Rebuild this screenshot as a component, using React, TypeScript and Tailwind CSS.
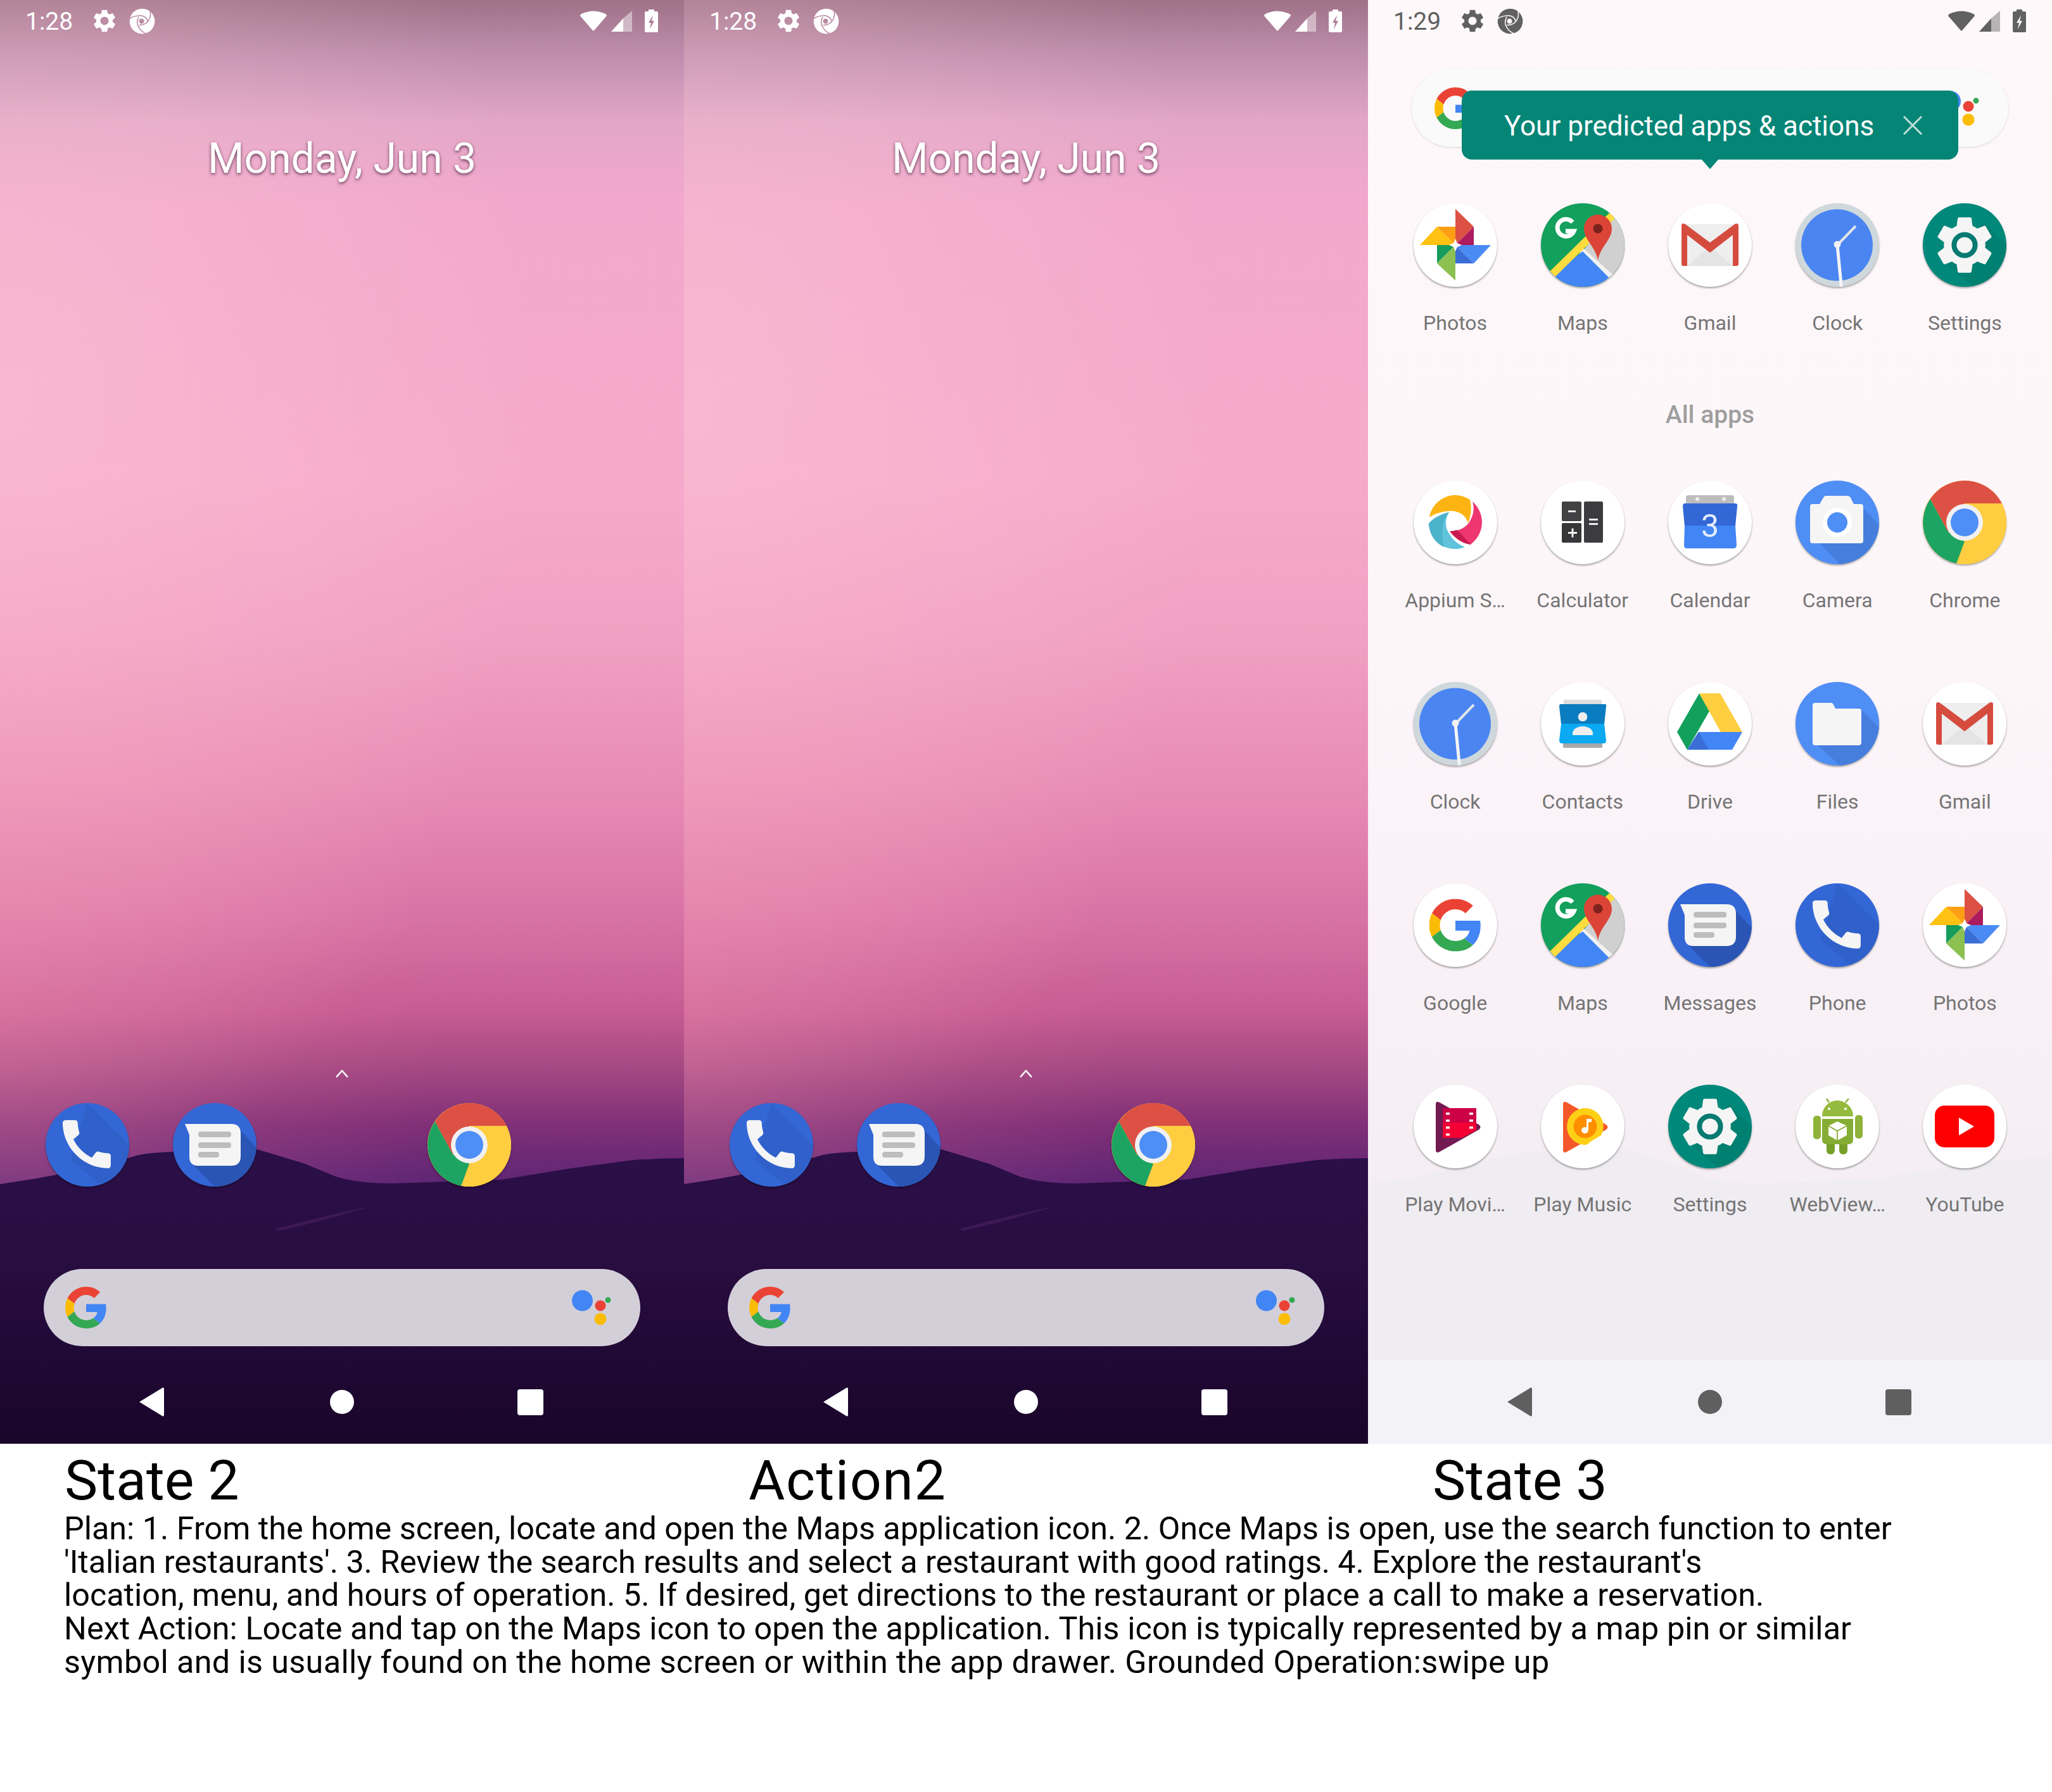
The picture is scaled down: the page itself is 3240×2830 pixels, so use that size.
const GEAR_OUTER =
  "M19.14 12.94c.04-.3.06-.61.06-.94 0-.32-.02-.64-.07-.94l2.03-1.58c.18-.14.23-.41.12-.61l-1.92-3.32c-.12-.22-.37-.29-.59-.22l-2.39.96c-.5-.38-1.03-.7-1.62-.94l-.36-2.54c-.04-.24-.24-.41-.48-.41h-3.84c-.24 0-.43.17-.47.41l-.36 2.54c-.59.24-1.13.57-1.62.94l-2.39-.96c-.22-.08-.47 0-.59.22L2.74 8.87c-.12.21-.08.47.12.61l2.03 1.58c-.05.3-.09.63-.09.94s.02.64.07.94l-2.03 1.58c-.18.14-.23.41-.12.61l1.92 3.32c.12.22.37.29.59.22l2.39-.96c.5.38 1.03.7 1.62.94l.36 2.54c.05.24.24.41.48.41h3.84c.24 0 .44-.17.47-.41l.36-2.54c.59-.24 1.13-.56 1.62-.94l2.39.96c.22.08.47 0 .59-.22l1.92-3.32c.12-.22.07-.47-.12-.61l-2.01-1.58z";
const GEAR_HOLE = "M12 15.6c-1.98 0-3.6-1.62-3.6-3.6s1.62-3.6 3.6-3.6 3.6 1.62 3.6 3.6-1.62 3.6-3.6 3.6z";
const RIDGE =
  "M0 70 L58 61 L90 55 L172 38 L215 25 Q234 20 275 19 L330 17 Q370 12 406 15 L482 38 L530 58 Q565 69 620 69 L792 63 L895 46 L999 32 Q1040 29 1080 29 L1080 480 L0 480 Z";

// 132 x 132 launcher icon shell
function Icon({ children, bg = "bg-white" }: { children: React.ReactNode; bg?: string }) {
  return (
    <div className={`h-[132px] w-[132px] shrink-0 overflow-hidden rounded-full shadow-[0_2px_3px_rgba(0,0,0,0.35)] ${bg}`}>
      <svg viewBox="0 0 132 132" className="h-full w-full">
        {children}
      </svg>
    </div>
  );
}

function GoogleG({ className }: { className: string }) {
  return (
    <svg viewBox="0 0 48 48" className={className}>
      <path fill="#EA4335" d="M24 9.5c3.54 0 6.71 1.22 9.21 3.6l6.85-6.85C35.9 2.38 30.47 0 24 0 14.62 0 6.51 5.38 2.56 13.22l7.98 6.19C12.43 13.72 17.74 9.5 24 9.5z" />
      <path fill="#4285F4" d="M46.98 24.55c0-1.57-.15-3.09-.38-4.55H24v9.02h12.94c-.58 2.96-2.26 5.48-4.78 7.18l7.73 6c4.51-4.18 7.09-10.36 7.09-17.65z" />
      <path fill="#FBBC05" d="M10.53 28.59c-.5-1.45-.78-2.99-.78-4.59s.27-3.14.78-4.59l-7.98-6.19C.92 16.46 0 20.12 0 24c0 3.88.92 7.54 2.56 10.78l7.97-6.19z" />
      <path fill="#34A853" d="M24 48c6.48 0 11.93-2.13 15.89-5.81l-7.73-6c-2.15 1.45-4.92 2.3-8.16 2.3-6.26 0-11.57-4.22-13.47-9.91l-7.98 6.19C6.51 42.62 14.62 48 24 48z" />
    </svg>
  );
}

function AssistantDots() {
  return (
    <svg viewBox="0 0 62 56" className="h-[56px] w-[62px]">
      <circle cx="16.5" cy="17" r="16.5" fill="#4285F4" />
      <circle cx="45" cy="25" r="8.5" fill="#EA4335" />
      <circle cx="45" cy="46" r="9.5" fill="#FBBC05" />
      <circle cx="57" cy="16" r="4.5" fill="#34A853" />
    </svg>
  );
}

function PhoneIcon() {
  return (
    <Icon bg="bg-[#3367d6]">
      <path d="M66 0 L132 66 L132 132 L90 132 L40 90 Z" fill="#2f5ec4" opacity="0.7" />
      <path transform="translate(14.3 14.3) scale(4.22)" fill="#f5f5f5" d="M20.01 15.38c-1.23 0-2.42-.2-3.53-.56-.35-.12-.74-.03-1.01.24l-1.57 1.97c-2.83-1.35-5.48-3.9-6.89-6.83l1.95-1.66c.27-.28.35-.67.24-1.02-.37-1.11-.56-2.3-.56-3.53 0-.54-.45-.99-.99-.99H4.19C3.65 3 3 3.24 3 3.99 3 13.28 10.73 21 20.01 21c.71 0 .99-.63.99-1.18v-3.45c0-.54-.45-.99-.99-.99z" />
    </Icon>
  );
}

function MessagesIcon() {
  return (
    <Icon bg="bg-[#3367d6]">
      <path d="M100 36 L132 70 L132 132 L66 132 L26 92 Z" fill="#2a4fa8" opacity="0.75" />
      <path d="M19 33 H92 Q107 33 107 48 V84 Q107 99 92 99 H40 Q26 99 26 85 V50 Z" fill="#f5f5f5" />
      <rect x="40" y="45" width="52" height="9" rx="4" fill="#bdbdbd" />
      <rect x="40" y="62" width="52" height="9" rx="4" fill="#bdbdbd" />
      <rect x="40" y="77" width="33" height="9" rx="4" fill="#bdbdbd" />
    </Icon>
  );
}

function ChromeIcon() {
  return (
    <Icon bg="bg-[#ffca41]">
      <path d="M125.5 36 L66 36 L66 96 L53 131 A66 66 0 0 0 125.5 36Z" fill="#ffcd40" />
      <path d="M11.8 29 L40 81 L66 96 L53 131 A66 66 0 0 1 11.8 29Z" fill="#1da462" />
      <path d="M11.8 29 A66 66 0 0 1 125.5 36 L66 36 L40 81 Z" fill="#dd5144" />
      <circle cx="66" cy="66" r="29" fill="#f1f1f1" />
      <circle cx="66" cy="66" r="22" fill="#4e8ef7" />
    </Icon>
  );
}

function PhotosIcon() {
  return (
    <Icon>
      <polygon points="66,9 95,37 66,66" fill="#dd5144" />
      <polygon points="95,37 95,66 66,66" fill="#ad1a5e" />
      <polygon points="10,66 37,37 66,66" fill="#ffc112" />
      <polygon points="37,37 66,37 66,66" fill="#ff9e12" />
      <polygon points="66,66 122,66 95,95" fill="#4a8af4" />
      <polygon points="66,66 95,95 66,95" fill="#3a6ed6" />
      <polygon points="37,66 66,66 37,95" fill="#169d5b" />
      <polygon points="66,66 37,95 66,122" fill="#8cc152" />
      <polygon points="66,56 69,63 76,66 69,69 66,76 63,69 56,66 63,63" fill="#fff" />
    </Icon>
  );
}

function MapsIcon() {
  return (
    <Icon bg="bg-[#12a05c]">
      <polygon points="112,16 140,40 140,132 116,120 66,76" fill="#d0d0d0" />
      <polygon points="66,70 135,132 112,132 60,82" fill="#f1f1f1" />
      <polygon points="66,76 118,128 100,140 30,140 10,120" fill="#4285f4" />
      <line x1="12" y1="118" x2="118" y2="14" stroke="#fddc3f" strokeWidth="12" />
      <path d="M90 18 C78 18 68 28 68 40 C68 58 86 68 90 90 C94 68 112 58 112 40 C112 28 102 18 90 18Z" fill="#db4437" />
      <circle cx="90" cy="40" r="7.5" fill="#7b231c" />
      <path d="M50 30 A13.5 13.5 0 1 0 52 44 H39" fill="none" stroke="#fff" strokeWidth="7" />
    </Icon>
  );
}

function GmailIcon() {
  return (
    <Icon>
      <rect x="21" y="33" width="90" height="66" rx="2" fill="#eeeeee" />
      <polygon points="30,99 66,68 102,99" fill="#e4e4e4" />
      <path d="M21 36 Q21 30 27 33 L66 62 L105 33 Q111 30 111 36 V96 Q111 99 108 99 H102 V50 L66 78 L30 50 V99 H24 Q21 99 21 96Z" fill="#d54c3f" />
    </Icon>
  );
}

function ClockIcon() {
  return (
    <Icon bg="bg-[#cfd8dc]">
      <circle cx="65.5" cy="66" r="56.5" fill="#4a85f2" />
      <line x1="66" y1="66" x2="95" y2="36" stroke="#dfe5e8" strokeWidth="4" />
      <polygon points="63.5,66 68.5,66 75,133 70,133" fill="#f5f5f5" />
      <circle cx="66" cy="65" r="5.5" fill="#f1f1f1" />
    </Icon>
  );
}

function SettingsIcon() {
  return (
    <Icon bg="bg-[#00897b]">
      <path d="M96 30 L132 66 L132 132 L80 132 L40 98 Z" fill="#00796b" opacity="0.6" />
      <path transform="translate(11.4 11.4) scale(4.55)" fill="#f5f5f5" d={GEAR_OUTER} />
      <circle cx="66" cy="66" r="16.6" fill="none" stroke="#077a72" strokeWidth="8" />
    </Icon>
  );
}

function AppiumIcon() {
  return (
    <Icon>
      <path d="M25 58 C28 38 46 23 66 23 C75 23 82 26 89 30 C92 42 91 56 86 67 C82 52 68 47 56 48 C44 49 33 52 25 58Z" fill="#fdb412" />
      <path d="M93 33 C103 42 108 54 108 66 C108 80 101 92 90 101 C77 99 65 91 57 80 C72 80 84 74 90 62 C95 52 96 43 93 33Z" fill="#ee3770" />
      <path d="M57 80 C66 91 77 99 90 101 C84 94 74 82 68 78 C64 79 60 80 57 80Z" fill="#c91a50" />
      <path d="M24 68 C30 60 42 53 56 50 C49 62 49 74 57 85 C62 94 71 101 81 105 C76 107 71 108 66 108 C43 108 25 90 24 68Z" fill="#60c3da" />
      <path d="M24 68 C30 60 42 53 56 50 C46 60 42 78 48 105 C33 98 25 84 24 68Z" fill="#4bb2cb" />
    </Icon>
  );
}

function CalculatorIcon() {
  return (
    <Icon>
      <rect x="33" y="33" width="31" height="31" rx="2" fill="#424144" />
      <rect x="33" y="67" width="31" height="31" rx="2" fill="#373639" />
      <rect x="68" y="33" width="30" height="65" rx="2" fill="#3c3b3e" />
      <rect x="43" y="47" width="12" height="3" fill="#e8e8e8" />
      <rect x="43" y="81" width="14" height="3" fill="#f5f5f5" />
      <rect x="48.5" y="75.5" width="3" height="14" fill="#f5f5f5" />
      <rect x="76" y="60" width="14" height="3" fill="#eeeeee" />
      <rect x="76" y="67" width="14" height="3" fill="#eeeeee" />
    </Icon>
  );
}

function CalendarIcon() {
  return (
    <Icon>
      <path d="M28 27 Q28 23 32 23 H100 Q104 23 104 27 V38 H28Z" fill="#bdbdbd" />
      <circle cx="46" cy="29" r="3" fill="#eeeeee" />
      <circle cx="88" cy="29" r="3" fill="#eeeeee" />
      <path d="M26 36 H106 Q110 36 109 41 L106 72 H26 L23 41 Q23 36 26 36Z" fill="#3367d6" />
      <path d="M26 71 H106 L108 102 Q108 107 103 107 H29 Q25 107 25 102Z" fill="#4285f4" />
      <text x="66" y="89" textAnchor="middle" fontFamily="Roboto, sans-serif" fontSize="50" fill="#e3ecfd">3</text>
    </Icon>
  );
}

function CameraIcon() {
  return (
    <Icon bg="bg-[#4f8ef5]">
      <path d="M100 36 L132 70 L132 132 L70 132 L30 90 Z" fill="#437bd8" opacity="0.8" />
      <path d="M27 37 H38 L44 27 Q45 24 49 24 H82 Q85 24 87 27 L92 37 H103 Q107 37 107 41 V95 Q107 99 103 99 H27 Q23 99 23 95 V41 Q23 37 27 37Z" fill="#f5f5f5" />
      <circle cx="66" cy="66" r="23" fill="#fff" />
      <circle cx="66" cy="66" r="16" fill="#4f8ef5" />
    </Icon>
  );
}

function ContactsIcon() {
  return (
    <Icon>
      <rect x="36" y="28" width="60" height="9" rx="2" fill="#dedede" />
      <rect x="35" y="95" width="62" height="9" rx="2" fill="#a8a8a8" />
      <path d="M31 35 H101 Q104 35 103 39 L100 67 H32 L29 39 Q29 35 31 35Z" fill="#0a7cc0" />
      <path d="M32 66 H100 L103 92 Q103 97 99 97 H33 Q29 97 29 92Z" fill="#0aa9f2" />
      <circle cx="66" cy="55" r="7.3" fill="#eeeeee" />
      <path d="M50 84 V81 C50 75 57 70 66 70 C75 70 82 75 82 81 V84Z" fill="#eeeeee" />
    </Icon>
  );
}

function DriveIcon() {
  return (
    <Icon>
      <polygon points="49,18 65,46 30,107 14,79" fill="#12a05c" />
      <polygon points="49,18 82,18 117,79 83,79" fill="#ffcd40" />
      <polygon points="48,79 117,79 101,107 30,107" fill="#4285f4" />
      <polygon points="48,79 64,107 30,107" fill="#3a6ed6" />
    </Icon>
  );
}

function FilesIcon() {
  return (
    <Icon bg="bg-[#4f8ef5]">
      <path d="M100 40 L132 72 L132 132 L70 132 L30 95 Z" fill="#437bd8" opacity="0.8" />
      <path d="M31 33 H56 Q59 33 60 36 L63 42 H100 Q104 42 104 46 V95 Q104 100 100 100 H31 Q27 100 27 95 V37 Q27 33 31 33Z" fill="#f5f5f5" />
    </Icon>
  );
}

function GoogleIcon() {
  return (
    <Icon>
      <svg x="24.5" y="24.5" width="83" height="83" viewBox="0 0 48 48">
        <path fill="#EA4335" d="M24 9.5c3.54 0 6.71 1.22 9.21 3.6l6.85-6.85C35.9 2.38 30.47 0 24 0 14.62 0 6.51 5.38 2.56 13.22l7.98 6.19C12.43 13.72 17.74 9.5 24 9.5z" />
        <path fill="#4285F4" d="M46.98 24.55c0-1.57-.15-3.09-.38-4.55H24v9.02h12.94c-.58 2.96-2.26 5.48-4.78 7.18l7.73 6c4.51-4.18 7.09-10.36 7.09-17.65z" />
        <path fill="#FBBC05" d="M10.53 28.59c-.5-1.45-.78-2.99-.78-4.59s.27-3.14.78-4.59l-7.98-6.19C.92 16.46 0 20.12 0 24c0 3.88.92 7.54 2.56 10.78l7.97-6.19z" />
        <path fill="#34A853" d="M24 48c6.48 0 11.93-2.13 15.89-5.81l-7.73-6c-2.15 1.45-4.92 2.3-8.16 2.3-6.26 0-11.57-4.22-13.47-9.91l-7.98 6.19C6.51 42.62 14.62 48 24 48z" />
      </svg>
    </Icon>
  );
}

function PlayMoviesIcon() {
  return (
    <Icon>
      <path d="M35 31 Q35 25 41 28 L103 63 Q108 67 103 71 L41 106 Q35 109 35 103Z" fill="#741a52" />
      <polygon points="46,37 99,37 99,60 46,60" fill="#cc0044" />
      <polygon points="46,60 99,60 99,72 76,84 46,84" fill="#f50035" />
      {[44, 55, 66, 77].map(y => <rect key={y} x="51" y={y} width="6" height="3.5" fill="#fff" />)}
      {[44, 55, 66].map(y => <rect key={y} x="88" y={y} width="6" height="3.5" fill="#fff" />)}
    </Icon>
  );
}

function PlayMusicIcon() {
  return (
    <Icon>
      <path d="M35 31 Q35 25 41 28 L103 63 Q108 67 103 71 L41 106 Q35 109 35 103Z" fill="#f4582a" />
      <path d="M70 37 A29 29 0 0 1 95 80 L78 90 Q74 95 70 95 A29 29 0 0 1 70 37Z" fill="#fdd017" />
      <circle cx="70" cy="66" r="18.5" fill="#ff8f00" />
      <path d="M72 54 H80 V59 H75 V72 A5.5 5 0 1 1 72 67.5Z" fill="#fafafa" />
    </Icon>
  );
}

function WebViewIcon() {
  return (
    <Icon>
      <line x1="53" y1="28" x2="49" y2="22" stroke="#8fb339" strokeWidth="2.5" />
      <line x1="79" y1="28" x2="84" y2="22" stroke="#8fb339" strokeWidth="2.5" />
      <path d="M42 50 C42 35 54 25 66 25 C78 25 91 35 91 50Z" fill="#95bb3e" />
      <circle cx="53" cy="38" r="2" fill="#fff" />
      <circle cx="79" cy="38" r="2" fill="#fff" />
      <rect x="28" y="49" width="12" height="37" rx="5" fill="#8fb339" />
      <rect x="94" y="48" width="12" height="37" rx="5" fill="#8fb339" />
      <rect x="49" y="88" width="13" height="22" rx="6" fill="#76a02a" />
      <rect x="69" y="88" width="13" height="22" rx="6" fill="#76a02a" />
      <path d="M42 54 H91 V87 Q91 94 84 94 H49 Q42 94 42 87Z" fill="#86ad33" />
      <polygon points="66,58 81,65 81,80 66,88 52,80 52,65" fill="#fff" />
      <path d="M52 65 L66 73 L81 65 M66 73 V88" stroke="#86ad33" strokeWidth="1.8" fill="none" />
    </Icon>
  );
}

function YouTubeIcon() {
  return (
    <Icon>
      <rect x="19" y="33" width="94" height="66" rx="15" fill="#ff0000" />
      <polygon points="57,52 81,66 57,80" fill="#fff" />
    </Icon>
  );
}

function StatusBar({ time, tone, id }: { time: string; tone: string; id: string }) {
  return (
    <div className={`relative flex h-[66px] items-center pl-[40px] pr-[41px] ${tone}`}>
      <span className="w-[73px] pt-[2px] text-[39px] leading-none [font-family:Roboto,sans-serif]">{time}</span>
      <svg viewBox="2 2 20 20" className="ml-[34px] h-[36px] w-[36px] fill-current">
        <path fillRule="evenodd" d={GEAR_OUTER + GEAR_HOLE} />
      </svg>
      <svg viewBox="0 0 42 42" className="ml-[21px] h-[41px] w-[41px]">
        <mask id={id}>
          <circle cx="21" cy="21" r="20.5" fill="#fff" />
          <circle cx="20" cy="21" r="4" fill="#000" />
          <path d="M.5 17 C4 14 10 12.5 15.6 12 C21.5 11.2 28 14 30 21" fill="none" stroke="#000" strokeWidth="1.6" />
          <path d="M33.7 4.4 C35 9.4 34.6 14 32 18.5 C29 24.4 23 27.3 16 27.3" fill="none" stroke="#000" strokeWidth="1.6" />
          <path d="M15.6 14 C12 20 12 26 16 31.7 C18.5 36 23 39.5 27.8 41.5" fill="none" stroke="#000" strokeWidth="1.6" />
        </mask>
        <circle cx="21" cy="21" r="20.5" fill="currentColor" mask={`url(#${id})`} />
      </svg>
      <svg viewBox="0 0 42 32" className="ml-auto h-[32px] w-[42px] fill-current">
        <path d="M0 8 Q0 6 2 5 Q21 -4 40 5 Q42 6 42 8 L23 30 Q21 33 19 30 Z" />
      </svg>
      <svg viewBox="0 0 33 33" className="ml-[7px] h-[33px] w-[33px] fill-current">
        <polygon points="0,33 19,12 19,33" />
        <polygon points="19,12 33,0 33,33 19,33" opacity="0.45" />
      </svg>
      <svg viewBox="0 0 21 36" className="ml-[20px] h-[36px] w-[21px] fill-current">
        <path fillRule="evenodd" d="M6 0 H15 V3 H19 Q21 3 21 5 V34 Q21 36 19 36 H2 Q0 36 0 34 V5 Q0 3 2 3 H6 Z M13 9 L6 21 H10 L8 31 L15 18 H11 Z" />
      </svg>
    </div>
  );
}

function NavBar({ tone, className = "" }: { tone: string; className?: string }) {
  return (
    <div className={`relative flex h-[132px] items-center pl-[220px] ${tone} ${className}`}>
      <svg viewBox="0 0 39 46" className="h-[46px] w-[39px] fill-current">
        <path d="M0 23 L36 1 Q39 -1 39 3 V43 Q39 47 36 45 Z" />
      </svg>
      <div className="ml-[262px] h-[38px] w-[38px] rounded-full bg-current" />
      <div className="ml-[258px] h-[41px] w-[41px] rounded-[4px] bg-current" />
    </div>
  );
}

function HomeScreen({ id }: { id: string }) {
  return (
    <div className="relative flex h-[2280px] w-[1080px] flex-col bg-[linear-gradient(180deg,#9f7288_0px,#c08fae_90px,#e2a6c7_190px,#f2a8cc_320px,#f6aacb_760px,#f1a0c4_1000px,#e88cb5_1240px,#d873a5_1450px,#c55b92_1600px,#a74a84_1680px,#7f2f77_1780px,#5e2574_1870px)] [font-family:Roboto,sans-serif]">
      <div className="absolute inset-0 bg-[radial-gradient(ellipse_at_0%_28%,rgba(255,205,215,0.4),rgba(255,205,215,0)_55%),radial-gradient(ellipse_at_0%_72%,rgba(255,140,170,0.25),rgba(255,140,170,0)_45%)]" />
      <svg viewBox="0 0 1080 480" className="absolute bottom-0 left-0 h-[480px] w-[1080px]">
        <defs>
          <linearGradient id={`ridge-${id}`} x1="0" x2="0" y1="0" y2="1">
            <stop offset="0" stopColor="#2b0f48" />
            <stop offset="0.4" stopColor="#280d40" />
            <stop offset="1" stopColor="#19052a" />
          </linearGradient>
        </defs>
        <path d={RIDGE} fill={`url(#ridge-${id})`} />
        <path d="M434 141 Q510 120 585 105 Q520 126 440 144 Z" fill="#54286d" opacity="0.45" />
      </svg>

      <StatusBar id={`swirl-${id}`} time="1:28" tone="text-white" />

      <p className="relative mt-[152px] text-center text-[66px] leading-none text-white [text-shadow:0_2px_5px_rgba(50,15,40,0.75)]">
        Monday, Jun 3
      </p>

      <div className="relative mt-[1405px] flex h-[13px] justify-center">
        <svg viewBox="0 0 22 13" className="h-[13px] w-[22px]">
          <path d="M2 12 L11 2 L20 12" fill="none" stroke="#fff" strokeWidth="2.6" />
        </svg>
      </div>

      <div className="relative mt-[40px] grid grid-cols-5 justify-items-center px-[37px]">
        <PhoneIcon />
        <MessagesIcon />
        <div />
        <ChromeIcon />
        <div />
      </div>

      <div className="relative mx-[69px] mt-[130px] flex h-[122px] items-center justify-between rounded-full bg-[#d3cfd9] pl-[34px] pr-[46px]">
        <GoogleG className="h-[66px] w-[66px]" />
        <AssistantDots />
      </div>

      <NavBar tone="mt-[22px] text-white" />
    </div>
  );
}

const ROWS: [React.ComponentType, string][][] = [
  [[AppiumIcon, "Appium S…"], [CalculatorIcon, "Calculator"], [CalendarIcon, "Calendar"], [CameraIcon, "Camera"], [ChromeIcon, "Chrome"]],
  [[ClockIcon, "Clock"], [ContactsIcon, "Contacts"], [DriveIcon, "Drive"], [FilesIcon, "Files"], [GmailIcon, "Gmail"]],
  [[GoogleIcon, "Google"], [MapsIcon, "Maps"], [MessagesIcon, "Messages"], [PhoneIcon, "Phone"], [PhotosIcon, "Photos"]],
  [[PlayMoviesIcon, "Play Movi…"], [PlayMusicIcon, "Play Music"], [SettingsIcon, "Settings"], [WebViewIcon, "WebView…"], [YouTubeIcon, "YouTube"]],
];

const PREDICTED: [React.ComponentType, string][] = [
  [PhotosIcon, "Photos"], [MapsIcon, "Maps"], [GmailIcon, "Gmail"], [ClockIcon, "Clock"], [SettingsIcon, "Settings"],
];

function AppCell({ icon: Glyph, label }: { icon: React.ComponentType; label: string }) {
  return (
    <div className="flex flex-col items-center">
      <Glyph />
      <span className="mt-[35px] h-[44px] whitespace-nowrap text-[32px] leading-[44px] text-[#757575]">{label}</span>
    </div>
  );
}

function Drawer() {
  return (
    <div className="relative flex h-[2280px] w-[1080px] flex-col bg-[linear-gradient(180deg,#fef8fa_0px,#fdf6f9_1000px,#f9f1f6_1500px,#f5eff4_1800px)] [font-family:Roboto,sans-serif]">
      <svg viewBox="0 0 1080 480" className="absolute bottom-0 left-0 h-[480px] w-[1080px]">
        <path d={RIDGE} fill="#efedf2" />
      </svg>

      <StatusBar id="swirl-drawer" time="1:29" tone="text-[#616161]" />

      <div className="relative mx-[69px] mt-[43px] flex h-[123px] items-center justify-between rounded-full bg-[#fafafa] pl-[36px] pr-[46px] shadow-[0_1px_3px_rgba(0,0,0,0.14)]">
        <GoogleG className="h-[66px] w-[66px]" />
        <AssistantDots />
        <div className="absolute left-[79px] top-[34px] flex h-[109px] w-[784px] items-center justify-between rounded-[16px] bg-[#048576] pl-[67px] pr-[56px]">
          <span className="whitespace-nowrap pt-[2px] text-[44px] leading-none text-white">Your predicted apps &amp; actions</span>
          <svg viewBox="0 0 32 32" className="h-[32px] w-[32px]">
            <path d="M2 2 L30 30 M30 2 L2 30" stroke="#fff" strokeOpacity="0.75" strokeWidth="3" />
          </svg>
          <svg viewBox="0 0 26 15" className="absolute left-1/2 top-full h-[15px] w-[26px] -translate-x-1/2">
            <polygon points="0,0 26,0 13,15" fill="#048576" />
          </svg>
        </div>
      </div>

      <div className="relative mt-[89px] grid grid-cols-5 px-[37px]">
        {PREDICTED.map(([icon, label]) => <AppCell key={label} icon={icon} label={label} />)}
      </div>

      <p className="relative mt-[98px] text-center text-[39px] font-medium leading-[50px] text-[#9e9e9e]">All apps</p>

      <div className="relative mt-[79px] grid grid-cols-5 gap-y-[107px] px-[37px]">
        {ROWS.flat().map(([icon, label]) => <AppCell key={label} icon={icon} label={label} />)}
      </div>

      <NavBar tone="text-[#5f5f5f] bg-[#f3f2f6]" className="mt-auto" />
    </div>
  );
}

export default function App() {
  return (
    <div className="h-[2830px] w-[3240px] bg-white text-black [font-family:Roboto,sans-serif]">
      <div className="flex">
        <HomeScreen id="a" />
        <HomeScreen id="b" />
        <Drawer />
      </div>
      <div className="mt-[8px] flex text-[88px] leading-[100px]">
        <div className="w-[1080px] pl-[102px]">State 2</div>
        <div className="w-[1080px] pl-[102px] tracking-[1.5px]">Action2</div>
        <div className="w-[1080px] pl-[102px]">State 3</div>
      </div>
      <div className="whitespace-nowrap pl-[101px] text-[50.3px] leading-[52.7px]">
        <div>Plan: 1. From the home screen, locate and open the Maps application icon. 2. Once Maps is open, use the search function to enter</div>
        <div className="tracking-[-0.08px]">'Italian restaurants'. 3. Review the search results and select a restaurant with good ratings. 4. Explore the restaurant's</div>
        <div>location, menu, and hours of operation. 5. If desired, get directions to the restaurant or place a call to make a reservation.</div>
        <div className="tracking-[0.08px]">Next Action: Locate and tap on the Maps icon to open the application. This icon is typically represented by a map pin or similar</div>
        <div className="tracking-[0.36px]">symbol and is usually found on the home screen or within the app drawer. Grounded Operation:swipe up</div>
      </div>
    </div>
  );
}
